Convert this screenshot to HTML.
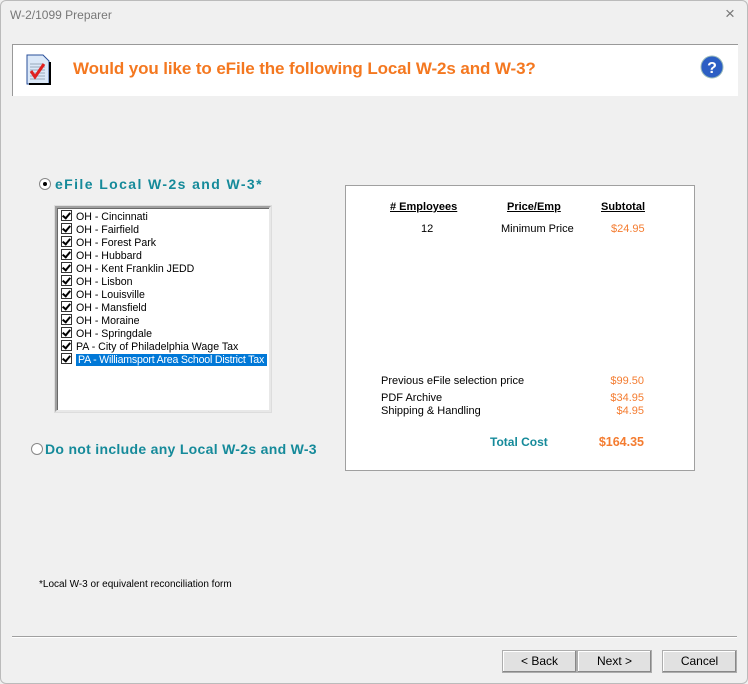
<!DOCTYPE html>
<html><head><style>
body{margin:0;width:748px;height:684px;background:#f0f0f0;font-family:"Liberation Sans",sans-serif;font-size:11px;color:#000;position:relative;overflow:hidden}
.a{position:absolute;white-space:nowrap}
.frame{position:absolute;left:0;top:0;width:746px;height:682px;border:1px solid #bbb;border-radius:6px}
.btn{position:absolute;top:650px;height:21px;background:#e1e1e1;border:1px solid #adadad;box-shadow:inset -1px -1px 0 #888,inset 1px 1px 0 #fff;text-align:center;line-height:21px;font-size:12px}
.chk{display:inline-block;width:9px;height:9px;border:1px solid #333;background:#fff;vertical-align:-1px;margin-right:4px;position:relative}
.chk:after{content:"";position:absolute;left:2px;top:0px;width:3px;height:6px;border:solid #000;border-width:0 2px 2px 0;transform:rotate(40deg)}
.li{height:13px;line-height:13px;padding-left:2px;font-size:10.6px}
.sel{background:#0078d7;color:#fff}
.o{color:#f47c30}
.t{color:#158a9a;font-weight:bold}
</style></head><body>
<div class="frame"></div>
<div class="a" style="left:10px;top:8px;font-size:12px;color:#777">W-2/1099 Preparer</div>
<div class="a" style="left:725px;top:4px;font-size:17px;color:#777">×</div>
<div class="a" style="left:12px;top:44px;width:725px;height:51px;background:#fff;border-top:1px solid #999;border-left:1px solid #999"></div>
<svg class="a" style="left:26px;top:54px" width="26" height="32" viewBox="0 0 26 32"><path d="M1 1h16l6 6v23H1z" fill="#dbe8f8" stroke="#2a4f9a"/><path d="M3 30h21V8" stroke="#000" stroke-width="2" fill="none"/><path d="M4 10h13M4 13h15M4 16h15M4 19h15M4 22h15M4 25h15" stroke="#9ab" stroke-width="1"/><path d="M5 17l4 6 9-13" stroke="#e02020" stroke-width="3" fill="none"/></svg>
<div class="a" style="left:73px;top:59px;font-size:17px;font-weight:bold;color:#f47820;letter-spacing:-0.1px">Would you like to eFile the following Local W-2s and W-3?</div>
<svg class="a" style="left:700px;top:55px" width="24" height="24"><circle cx="12" cy="12" r="11" fill="#2c5fc4" stroke="#9bb" /><text x="12" y="18" text-anchor="middle" font-family="Liberation Sans" font-weight="bold" font-size="16" fill="#fff">?</text></svg>
<div class="a" style="left:39px;top:178px;width:10px;height:10px;border-radius:50%;background:#fff;border:1px solid #888"></div>
<div class="a" style="left:43px;top:182px;width:4px;height:4px;border-radius:50%;background:#000"></div>
<div class="a t" style="left:55px;top:176px;font-size:14px;letter-spacing:1.4px">eFile Local W-2s and W-3*</div>
<div class="a" style="left:55px;top:206px;width:212px;height:202px;background:#fff;border:2px solid;border-color:#a0a0a0 #e8e8e8 #e8e8e8 #a0a0a0;box-shadow:0 0 0 1px #ddd,inset 1px 1px 0 #696969"></div>
<div class="a" style="left:59px;top:210px;width:208px">
<div class="li"><span class="chk"></span>OH - Cincinnati</div>
<div class="li"><span class="chk"></span>OH - Fairfield</div>
<div class="li"><span class="chk"></span>OH - Forest Park</div>
<div class="li"><span class="chk"></span>OH - Hubbard</div>
<div class="li"><span class="chk"></span>OH - Kent Franklin JEDD</div>
<div class="li"><span class="chk"></span>OH - Lisbon</div>
<div class="li"><span class="chk"></span>OH - Louisville</div>
<div class="li"><span class="chk"></span>OH - Mansfield</div>
<div class="li"><span class="chk"></span>OH - Moraine</div>
<div class="li"><span class="chk"></span>OH - Springdale</div>
<div class="li"><span class="chk"></span>PA - City of Philadelphia Wage Tax</div>
<div class="li" style="overflow:hidden;width:206px"><span class="chk"></span><span class="sel" style="padding:0 60px 0 2px;letter-spacing:-0.2px">PA - Williamsport Area School District Tax</span></div>
</div>
<div class="a" style="left:31px;top:443px;width:10px;height:10px;border-radius:50%;background:#fff;border:1px solid #888"></div>
<div class="a t" style="left:45px;top:441px;font-size:14px;letter-spacing:0.3px">Do not include any Local W-2s and W-3</div>
<div class="a" style="left:345px;top:185px;width:348px;height:284px;background:#fff;border:1px solid #a0a0a0"></div>
<div class="a" style="left:390px;top:201px;font-weight:bold;text-decoration:underline">#&nbsp;Employees</div>
<div class="a" style="left:507px;top:201px;font-weight:bold;text-decoration:underline">Price/Emp</div>
<div class="a" style="left:601px;top:201px;font-weight:bold;text-decoration:underline">Subtotal</div>
<div class="a" style="left:421px;top:223px">12</div>
<div class="a" style="left:501px;top:223px">Minimum Price</div>
<div class="a o" style="left:611px;top:223px">$24.95</div>
<div class="a" style="left:381px;top:375px">Previous eFile selection price</div>
<div class="a o" style="right:104px;top:375px">$99.50</div>
<div class="a" style="left:381px;top:392px">PDF Archive</div>
<div class="a o" style="right:104px;top:392px">$34.95</div>
<div class="a" style="left:381px;top:405px">Shipping &amp; Handling</div>
<div class="a o" style="right:104px;top:405px">$4.95</div>
<div class="a t" style="left:490px;top:435px;font-size:12px">Total Cost</div>
<div class="a o" style="right:104px;top:435px;font-size:12.5px;font-weight:bold">$164.35</div>
<div class="a" style="left:39px;top:579px;font-size:10px">*Local W-3 or equivalent reconciliation form</div>
<div class="a" style="left:12px;top:636px;width:725px;height:0;border-top:1px solid #a0a0a0;border-bottom:1px solid #fff"></div>
<div class="btn" style="left:502px;width:73px">&lt; Back</div>
<div class="btn" style="left:577px;width:73px">Next &gt;</div>
<div class="btn" style="left:662px;width:73px">Cancel</div>
</body></html>
